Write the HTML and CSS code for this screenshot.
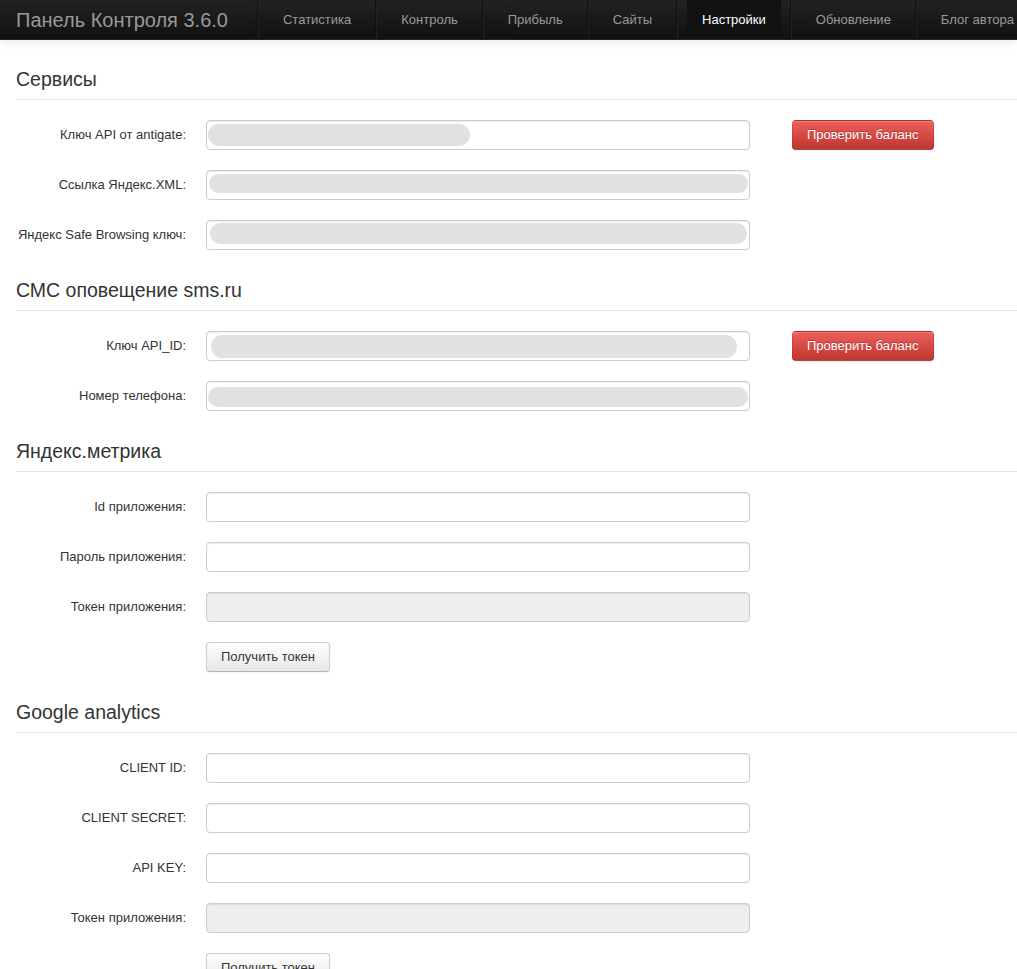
FILE: index.html
```html
<!DOCTYPE html>
<html lang="ru">
<head>
    <meta charset="UTF-8">
    <meta name="viewport" content="width=device-width, initial-scale=1.0">
    <title>Панель Контроля 3.6.0</title>
    <link rel="stylesheet" href="styles.css">
</head>
<body>
    <div class="navbar">
        <a class="brand" href="#">Панель Контроля 3.6.0</a>
        <ul class="nav">
            <li class="divider"></li>
            <li><a href="#">Статистика</a></li>
            <li class="divider"></li>
            <li><a href="#">Контроль</a></li>
            <li class="divider"></li>
            <li><a href="#">Прибыль</a></li>
            <li class="divider"></li>
            <li><a href="#">Сайты</a></li>
            <li class="divider"></li>
            <li class="active"><a href="#">Настройки</a></li>
            <li class="divider"></li>
            <li><a href="#">Обновление</a></li>
            <li class="divider"></li>
            <li><a href="#">Блог автора</a></li>
        </ul>
    </div>

    <form class="settings">
        <!-- Сервисы -->
        <div class="legend">Сервисы</div>
        <div class="group">
            <label class="label">Ключ API от antigate:</label>
            <div class="field"><span class="mask mask1"></span></div>
            <button type="button" class="btn btn-danger">Проверить баланс</button>
        </div>
        <div class="group">
            <label class="label">Ссылка Яндекс.XML:</label>
            <div class="field"><span class="mask mask2"></span></div>
        </div>
        <div class="group">
            <label class="label">Яндекс Safe Browsing ключ:</label>
            <div class="field"><span class="mask mask3"></span></div>
        </div>

        <!-- СМС -->
        <div class="legend">СМС оповещение sms.ru</div>
        <div class="group">
            <label class="label">Ключ API_ID:</label>
            <div class="field"><span class="mask mask4"></span></div>
            <button type="button" class="btn btn-danger">Проверить баланс</button>
        </div>
        <div class="group">
            <label class="label">Номер телефона:</label>
            <div class="field"><span class="mask mask5"></span></div>
        </div>

        <!-- Яндекс.метрика -->
        <div class="legend">Яндекс.метрика</div>
        <div class="group">
            <label class="label">Id приложения:</label>
            <input class="input" type="text">
        </div>
        <div class="group">
            <label class="label">Пароль приложения:</label>
            <input class="input" type="text">
        </div>
        <div class="group">
            <label class="label">Токен приложения:</label>
            <input class="input" type="text" readonly>
        </div>
        <div class="group">
            <span class="label"></span>
            <button type="button" class="btn">Получить токен</button>
        </div>

        <!-- Google analytics -->
        <div class="legend">Google analytics</div>
        <div class="group">
            <label class="label">CLIENT ID:</label>
            <input class="input" type="text">
        </div>
        <div class="group">
            <label class="label">CLIENT SECRET:</label>
            <input class="input" type="text">
        </div>
        <div class="group">
            <label class="label">API KEY:</label>
            <input class="input" type="text">
        </div>
        <div class="group">
            <label class="label">Токен приложения:</label>
            <input class="input" type="text" readonly>
        </div>
        <div class="group">
            <span class="label"></span>
            <button type="button" class="btn">Получить токен</button>
        </div>
    </form>
</body>
</html>
```

FILE: styles.css
```css
body {
    margin: 0;
    font-family: "Liberation Sans", Arial, sans-serif;
    font-size: 13px;
    line-height: 20px;
    color: #333;
    background-color: #fff;
    overflow-x: hidden;
}

/* навигация */
.navbar {
    display: flex;
    height: 39px;
    padding-left: 16px;
    margin-bottom: 19px;
    background-color: #1b1b1b;
    background-image: linear-gradient(to bottom, #222, #111);
    border-bottom: 1px solid #252525;
    box-shadow: 0 1px 10px rgba(0, 0, 0, 0.1);
    white-space: nowrap;
    overflow: hidden;
}
.brand {
    display: block;
    padding: 10px 20px 9px 0;
    font-size: 20px;
    line-height: 20px;
    color: #999;
    text-decoration: none;
}
.nav {
    display: flex;
    margin: 0;
    padding: 0;
    list-style: none;
}
.nav a {
    display: block;
    padding: 10px 15px 9px;
    color: #999;
    text-decoration: none;
}
.nav .active a {
    color: #fff;
    background-color: #111;
}
.nav .divider {
    height: 39px;
    margin: 0 9px;
    border-left: 1px solid #111;
    border-right: 1px solid #222;
}

/* форма */
.settings {
    margin: 0;
    padding-left: 16px;
}
.legend {
    font-size: 19.5px;
    line-height: 40px;
    color: #333;
    border-bottom: 1px solid #e5e5e5;
    margin-bottom: 20px;
}
.group {
    display: flex;
    align-items: flex-start;
    margin-bottom: 20px;
}
.label {
    width: 170px;
    margin-right: 20px;
    padding-top: 5px;
    text-align: right;
    flex-shrink: 0;
}
.input, .field {
    box-sizing: border-box;
    width: 544px;
    height: 30px;
    margin: 0;
    padding: 4px 6px;
    font: inherit;
    color: #555;
    background-color: #fff;
    border: 1px solid #ccc;
    border-radius: 4px;
    box-shadow: inset 0 1px 1px rgba(0, 0, 0, 0.075);
}
.input[readonly] {
    background-color: #eee;
}
.field {
    padding: 0;
}
.mask {
    display: block;
    background-color: #e1e1e1;
    border-radius: 12px;
}
.mask1 { margin: 3px 0 0 1px; width: 262px; height: 22px; }
.mask2 { margin: 3px 0 0 2px; width: 539px; height: 19px; }
.mask3 { margin: 2px 0 0 3px; width: 537px; height: 21px; }
.mask4 { margin: 3px 0 0 4px; width: 526px; height: 23px; }
.mask5 { margin: 5px 0 0 1px; width: 540px; height: 20px; }

/* кнопки */
.btn {
    height: 30px;
    padding: 4px 14px;
    font: inherit;
    line-height: 20px;
    color: #333;
    text-shadow: 0 1px 1px rgba(255, 255, 255, 0.75);
    background-color: #f5f5f5;
    background-image: linear-gradient(to bottom, #fff, #e6e6e6);
    border: 1px solid #ccc;
    border-bottom-color: #b3b3b3;
    border-radius: 4px;
    box-shadow: inset 0 1px 0 rgba(255, 255, 255, 0.2), 0 1px 2px rgba(0, 0, 0, 0.05);
    cursor: pointer;
}
.btn-danger {
    margin-left: 42px;
    color: #fff;
    text-shadow: 0 -1px 0 rgba(0, 0, 0, 0.25);
    background-color: #da4f49;
    background-image: linear-gradient(to bottom, #ee5f5b, #bd362f);
    border-color: rgba(0, 0, 0, 0.1) rgba(0, 0, 0, 0.1) rgba(0, 0, 0, 0.25);
}
```
